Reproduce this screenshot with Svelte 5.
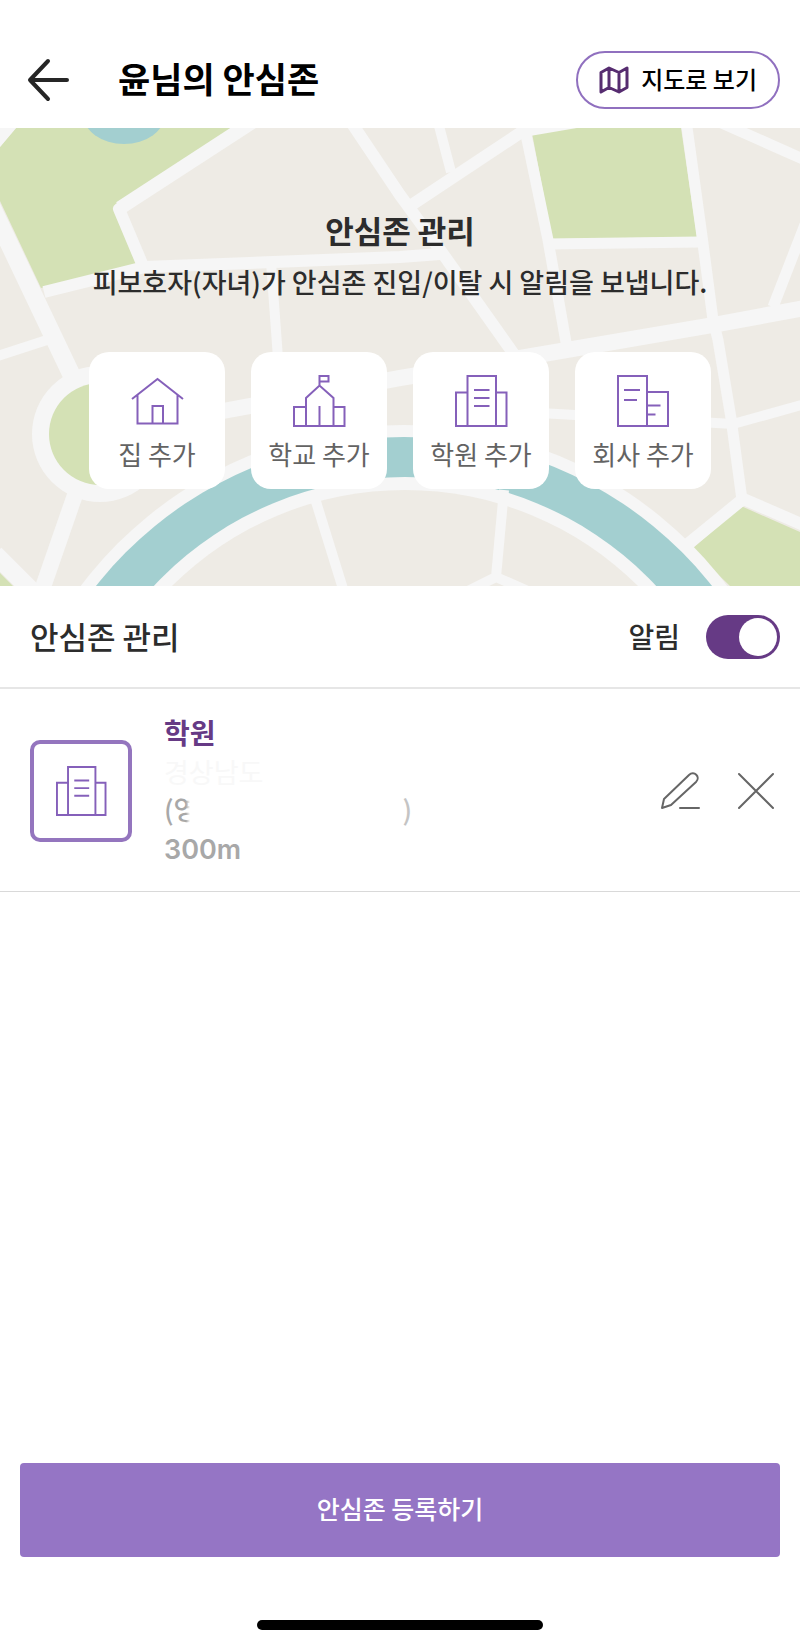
<script>
  const zones = [
    { id: 'home', label: '집 추가' },
    { id: 'school', label: '학교 추가' },
    { id: 'academy', label: '학원 추가' },
    { id: 'office', label: '회사 추가' }
  ];
  let alarm = $state(true);
</script>

{#snippet zoneIcon(id)}
  <svg class="zone-icon" viewBox="0 0 52 52" aria-hidden="true">
    {#if id === 'home'}
      <path d="M1 24 26.500 4 52 24M6.500 20V48.500H46.500V20M21.500 48.500V31H32V48.500" />
    {:else if id === 'school'}
      <path d="M13 51V23L26.500 10.500 40.500 23V51M26.500 10.500V1H35.500V6.500H26.500M13 32H1V51H51.500V32H40.500M26.500 31V51" />
    {:else if id === 'academy'}
      <path d="M12.500 51V1H41V51M12.500 17.500H1V51H51.500V17.500H41M19 15H34.500M19 23H34.500M19 31H34.500" />
    {:else}
      <path d="M1 51V1H30V51ZM30 17H51V51H30M7 15H23M7 25H20M30 30.500H43.500M30 39.500H38.500" />
    {/if}
  </svg>
{/snippet}

<main class="page">
  <header class="topbar">
    <button class="plain" aria-label="뒤로">
      <svg class="back-icon" viewBox="0 0 44 44" aria-hidden="true">
        <path d="M22 3 4 22 22 41M4 22H41" />
      </svg>
    </button>
    <h1>윤님의 안심존</h1>
    <button class="map-button">
      <svg class="map-icon" viewBox="0 0 30 28" aria-hidden="true">
        <path d="M2 6.500 10 2 20 6.500 28 2V21.500L20 26 10 21.500 2 26ZM10 2V21.500M20 6.500V26" />
      </svg>
      <span>지도로 보기</span>
    </button>
  </header>

  <section class="hero">
    <svg class="map" viewBox="0 128 800 458" preserveAspectRatio="xMidYMid slice" aria-hidden="true">
      <rect class="land" x="0" y="128" width="800" height="458" />
      <path class="park" d="M16 128H236L113 208 138 264 41 288 0 201V147ZM532 133 567 128H681L697 237 552 239ZM741 506 800 532V586H730L692 549ZM0 573 13 586H0Z" />
      <path class="road-fill" d="M0 128H16L0 147Z" />
      <ellipse class="water" cx="124" cy="114" rx="41" ry="30" />
      <g class="road">
        <path stroke-width="14" d="M260 117 120 208" />
        <path stroke-width="12" stroke-linejoin="round" d="M135 198 119 209 143 266" />
        <path stroke-width="12" d="M44 292 145 267 400 257 440 254" />
        <path stroke-width="18" d="M-15 193 73 378" />
        <path stroke-width="10" d="M-5 357 50 339M271 262 279 372M438 122 451 172" />
        <path stroke-width="12" d="M351 122 400 195 443 254 518 360M410 206 523 131 600 118" />
        <path stroke-width="11" d="M524 125 548 240 567 348M686 120 702 236 713 320 718 340 731 418 742 500" />
        <path stroke-width="11" d="M548 244 700 242M715 120 805 160M773 307 806 222" />
        <path stroke-width="16" d="M805 308 713 325 520 358 400 378 180 419" />
        <path stroke-width="10" d="M540 413 733 424 805 404" />
        <path stroke-width="12" d="M743 499 683 548M741 498 806 526" />
        <path stroke-width="16" d="M76 492 42 590" />
        <path stroke-width="18" d="M-5 554 40 599" />
      </g>
      <circle class="road-fill" cx="100" cy="434" r="68" />
      <circle class="park" cx="100" cy="434" r="51" />
      <circle class="road-fill" cx="404" cy="830" r="405" />
      <circle class="water" cx="404" cy="830" r="393" />
      <circle class="road-fill" cx="405" cy="821" r="344" />
      <circle class="land" cx="405" cy="821" r="331" />
      <path class="road" stroke-width="10" d="M313 492 344 592M504 490 496 577 466 592M496 577 530 592" />
    </svg>
    <div class="hero-content">
      <h2>안심존 관리</h2>
      <p>피보호자(자녀)가 안심존 진입/이탈 시 알림을 보냅니다.</p>
      <div class="cards">
        {#each zones as zone (zone.id)}
          <button class="card">
            {@render zoneIcon(zone.id)}
            {zone.label}
          </button>
        {/each}
      </div>
    </div>
  </section>

  <section>
    <div class="section-bar">
      <h2>안심존 관리</h2>
      <label for="alarm">알림</label>
      <input id="alarm" class="switch" type="checkbox" bind:checked={alarm} />
    </div>
    <ul>
      <li>
        <div class="thumb">{@render zoneIcon('academy')}</div>
        <div class="details">
          <h3>학원</h3>
          <span class="region">경상남도</span>
          <span class="address"><span class="veiled">(영</span><span class="close">)</span></span>
          <span class="radius">300m</span>
        </div>
        <button class="plain" aria-label="수정">
          <svg class="action-icon" viewBox="0 0 40 40" aria-hidden="true">
            <path d="M2 37 4 28 29 4C34-1 41 6 36 11L11 34ZM20 37H39" />
          </svg>
        </button>
        <button class="plain" aria-label="삭제">
          <svg class="action-icon" viewBox="0 0 40 40" aria-hidden="true">
            <path d="M3 3 37 37M37 3 3 37" />
          </svg>
        </button>
      </li>
    </ul>
  </section>

  <footer>
    <button class="register">안심존 등록하기</button>
    <div class="home-indicator"></div>
  </footer>
</main>

<style>
  :global(body) {
    margin: 0;
    background: #fff;
  }
  .page {
    min-height: 100vh;
    display: flex;
    flex-direction: column;
    font-family: 'Noto Sans CJK KR', sans-serif;
    color: #2c2c2c;
  }
  h1, h2, h3, p, ul {
    margin: 0;
    padding: 0;
  }
  button {
    font-family: inherit;
    cursor: pointer;
  }
  svg {
    display: block;
    fill: none;
  }
  .plain {
    border: 0;
    padding: 0;
    background: none;
  }
  .topbar {
    display: flex;
    align-items: center;
    padding: 50px 20px 18px 26px;
    height: 60px;
  }
  .back-icon {
    width: 44px;
    height: 44px;
    stroke: #262626;
    stroke-width: 4;
    stroke-linecap: round;
    stroke-linejoin: round;
  }
  h1 {
    flex: 1;
    padding: 0 0 4px 48px;
    font-size: 35px;
    line-height: 44px;
    font-weight: 700;
    color: #000;
  }
  .map-button {
    display: flex;
    align-items: center;
    gap: 12px;
    height: 58px;
    padding: 0 21px;
    border: 2px solid #9070bf;
    border-radius: 29px;
    background: #fff;
    color: #000;
    font-size: 24px;
    line-height: 36px;
    font-weight: 500;
  }
  .map-button span {
    padding-bottom: 2px;
  }
  .map-icon {
    width: 30px;
    height: 28px;
    stroke: #562c70;
    stroke-width: 3;
    stroke-linejoin: round;
  }
  .hero {
    position: relative;
    overflow: hidden;
  }
  .map {
    position: absolute;
    inset: 0;
    width: 100%;
    height: 100%;
  }
  .land {
    fill: #eeebe5;
  }
  .park {
    fill: #d4e1b5;
  }
  .water {
    fill: #a3cfd0;
  }
  .road {
    stroke: #f6f6f6;
  }
  .road-fill {
    fill: #f6f6f6;
  }
  .hero-content {
    position: relative;
    display: flex;
    flex-direction: column;
    align-items: center;
    padding: 78px 20px 97px;
    text-align: center;
  }
  .hero h2 {
    font-size: 31px;
    line-height: 48px;
    font-weight: 700;
  }
  .hero p {
    padding-top: 2px;
    font-size: 27px;
    line-height: 52px;
    font-weight: 500;
  }
  .cards {
    display: flex;
    gap: 26px;
    padding-top: 44px;
  }
  .card {
    display: flex;
    flex-direction: column;
    align-items: center;
    gap: 8px;
    width: 136px;
    height: 137px;
    padding: 23px 0 0;
    border: 0;
    border-radius: 20px;
    background: #fff;
    color: #636363;
    font-size: 26px;
    line-height: 38px;
  }
  .zone-icon {
    width: 52px;
    height: 52px;
    stroke: #8560ba;
    stroke-width: 2;
    overflow: visible;
  }
  .section-bar {
    display: flex;
    align-items: center;
    height: 101px;
    padding: 0 20px 0 30px;
    border-bottom: 2px solid #e6e6e6;
  }
  .section-bar h2 {
    flex: 1;
    padding-bottom: 2px;
    font-size: 31px;
    line-height: 44px;
    font-weight: 500;
  }
  .section-bar label {
    padding-bottom: 2px;
    font-size: 28px;
    line-height: 44px;
    font-weight: 500;
  }
  .switch {
    appearance: none;
    display: flex;
    align-items: center;
    width: 74px;
    height: 44px;
    margin: 0 0 0 26px;
    padding: 0 3px;
    box-sizing: border-box;
    border-radius: 22px;
    background: #cfcfcf;
    cursor: pointer;
  }
  .switch::before {
    content: '';
    width: 38px;
    height: 38px;
    border-radius: 50%;
    background: #fff;
  }
  .switch:checked {
    justify-content: flex-end;
    background: #663a85;
  }
  li {
    display: flex;
    align-items: center;
    gap: 36px;
    padding: 24px 24px 22px 30px;
    border-bottom: 1px solid #d9d9d9;
  }
  .thumb {
    display: grid;
    place-items: center;
    width: 94px;
    height: 94px;
    border: 4px solid #9475be;
    border-radius: 10px;
  }
  .thumb .zone-icon {
    width: 50px;
    height: 50px;
  }
  .details {
    flex: 1;
    display: flex;
    flex-direction: column;
    margin-left: -4px;
    font-size: 27px;
    line-height: 39px;
    color: #a8a8a8;
  }
  h3 {
    font-size: 28px;
    line-height: 39px;
    font-weight: 700;
    color: #663a85;
  }
  .region {
    color: #f8f8f8;
  }
  .address {
    display: flex;
    gap: 204px;
    font-weight: 500;
    line-height: 36px;
    padding-bottom: 3px;
  }
  .veiled {
    position: relative;
  }
  .veiled::after {
    content: '';
    position: absolute;
    inset: 0 0 0 22px;
    background: linear-gradient(to right, transparent, #fff 4px);
  }
  .close {
    color: #c4c4c4;
  }
  .radius {
    font-family: Inter, sans-serif;
    font-weight: 600;
  }
  .action-icon {
    width: 40px;
    height: 40px;
    stroke: #666;
    stroke-width: 2;
    stroke-linecap: round;
    stroke-linejoin: round;
  }
  footer {
    margin-top: auto;
    padding: 0 20px 17px;
  }
  .register {
    display: block;
    width: 100%;
    height: 94px;
    padding: 0 0 4px;
    border: 0;
    border-radius: 4px;
    background: #9575c5;
    color: #fff;
    font-size: 25px;
    line-height: 38px;
    font-weight: 500;
  }
  .home-indicator {
    width: 286px;
    max-width: 60%;
    height: 10px;
    margin: 63px auto 0;
    border-radius: 5px;
    background: #000;
  }
</style>
